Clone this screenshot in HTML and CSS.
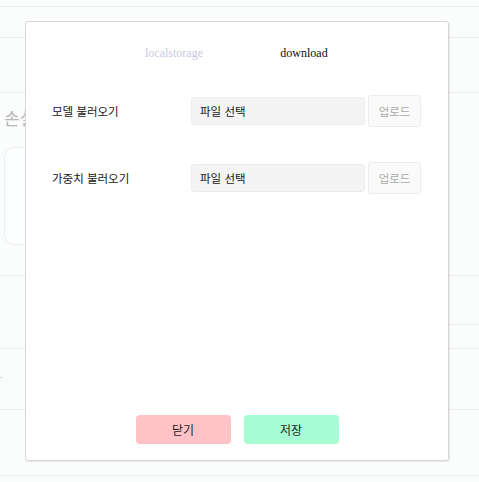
FILE: index.html
```html
<!DOCTYPE html>
<html lang="ko">
<head>
<meta charset="utf-8">
<link rel="stylesheet" href="styles.css">
</head>
<body>
<div class="page">
  <div class="band band-top"></div>
  <div class="band band-nav"></div>
  <div class="band band-sub"></div>
  <section class="loss">
    <h2 class="loss-title">손실</h2>
    <div class="loss-card"></div>
  </section>
  <div class="band band-a"><div class="band-split"></div></div>
  <div class="band band-b"><span class="dot">·</span></div>
  <div class="band band-c"></div>
  <div class="band band-d"></div>
</div>

<div class="modal">
  <div class="tabs">
    <div class="tab tab-off">localstorage</div>
    <div class="tab tab-on">download</div>
  </div>
  <div class="rows">
    <div class="row">
      <div class="label">모델 불러오기</div>
      <div class="file">파일 선택</div>
      <button class="upload">업로드</button>
    </div>
    <div class="row">
      <div class="label">가중치 불러오기</div>
      <div class="file">파일 선택</div>
      <button class="upload">업로드</button>
    </div>
  </div>
  <div class="actions">
    <button class="btn btn-close">닫기</button>
    <button class="btn btn-save">저장</button>
  </div>
</div>
</body>
</html>
```
FILE: styles.css
```css
html, body {
  margin: 0;
  padding: 0;
}
body {
  width: 479px;
  height: 482px;
  overflow: hidden;
  background: #fbfcfc;
  font-family: "Noto Sans CJK KR", "Noto Sans", sans-serif;
  position: relative;
}
.page {
  display: flex;
  flex-direction: column;
}
.band {
  border-bottom: 1px solid #ececec;
  box-sizing: border-box;
}
.band-top { height: 7px; }
.band-nav { height: 31px; }
.band-sub { height: 55px; }
.loss {
  height: 183px;
  border-bottom: 1px solid #ececec;
  padding: 13px 0 0 4px;
  box-sizing: border-box;
}
.loss-title {
  margin: 0;
  font-size: 17px;
  font-weight: 400;
  color: #b8b8b8;
  line-height: 24px;
}
.loss-card {
  margin-top: 17px;
  width: 200px;
  height: 98px;
  border: 1px solid #ececec;
  border-radius: 10px;
  box-sizing: border-box;
  background: #fdfefe;
}
.band-a {
  height: 73px;
  display: flex;
  justify-content: flex-end;
}
.band-split {
  width: 40%;
  height: 48px;
  border-bottom: 1px solid #ececec;
}
.band-b {
  height: 61px;
  position: relative;
}
.dot {
  position: absolute;
  left: 0;
  top: 24px;
  font-size: 8px;
  color: #aaa;
  line-height: 10px;
}
.band-c { height: 66px; }
.band-d { height: 10px; border-bottom: none; }

.modal {
  position: absolute;
  left: 25px;
  top: 21px;
  width: 424px;
  height: 440px;
  box-sizing: border-box;
  background: #fff;
  border: 1px solid #d6d6d6;
  border-radius: 3px;
  box-shadow: 1px 1px 1px rgba(0,0,0,0.08);
  display: flex;
  flex-direction: column;
  padding: 0 26px;
}
.tabs {
  display: flex;
  justify-content: center;
  margin-top: 21px;
  margin-left: 4px;
}
.tab {
  width: 130px;
  text-align: center;
  font-family: "Liberation Serif", serif;
  font-size: 12px;
  line-height: 20px;
}
.tab-off { color: #c8cadf; }
.tab-on { color: #111; }
.rows {
  display: flex;
  flex-direction: column;
  gap: 35px;
  margin-top: 32px;
}
.row {
  display: flex;
  align-items: center;
  height: 32px;
}
.label {
  width: 139px;
  font-size: 11.5px;
  color: #161616;
}
.file {
  width: 174px;
  height: 28px;
  box-sizing: border-box;
  background: #f4f4f4;
  border: 1px solid #ececec;
  border-radius: 3px;
  font-size: 11.5px;
  line-height: 26px;
  padding-left: 8px;
  color: #161616;
}
.upload {
  margin-left: 3px;
  width: 53px;
  height: 32px;
  box-sizing: border-box;
  background: #fafafa;
  border: 1px solid #ececec;
  border-radius: 3px;
  font-family: "Noto Sans CJK KR", sans-serif;
  font-size: 11.5px;
  color: #aaa;
  padding: 0;
}
.actions {
  margin-top: auto;
  margin-bottom: 16px;
  display: flex;
  justify-content: center;
  gap: 13px;
}
.btn {
  width: 95px;
  height: 29px;
  border: none;
  border-radius: 4px;
  font-family: "Noto Sans CJK KR", sans-serif;
  font-size: 12px;
  color: #1c1c1c;
  padding: 0;
}
.btn-close { background: #ffc3c7; }
.btn-save { background: #a6fdd3; }
```
